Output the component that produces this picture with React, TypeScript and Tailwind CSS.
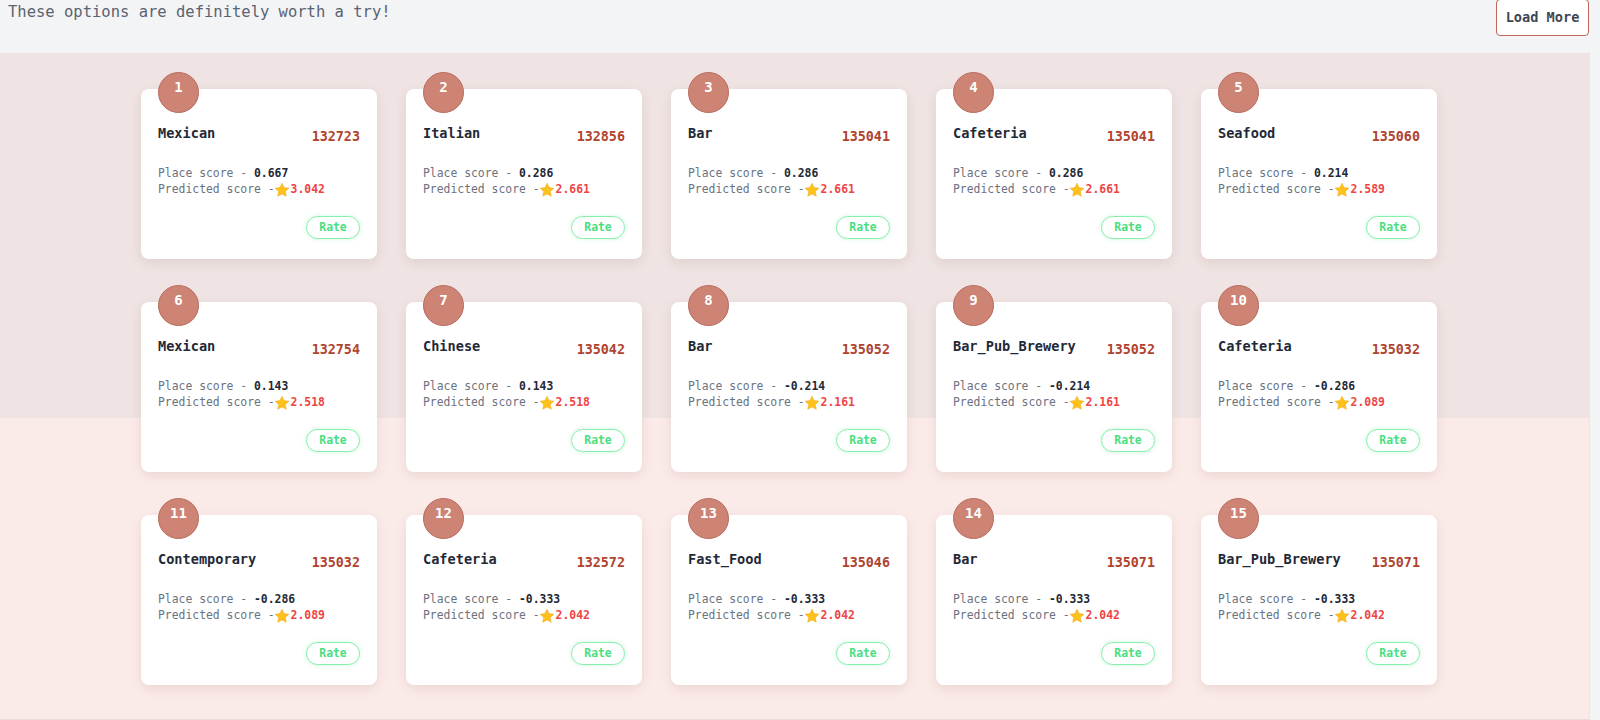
import React from "react";

const places = [
    { name: "Mexican", id: "132723", place: "0.667", predicted: "3.042" },
    { name: "Italian", id: "132856", place: "0.286", predicted: "2.661" },
    { name: "Bar", id: "135041", place: "0.286", predicted: "2.661" },
    { name: "Cafeteria", id: "135041", place: "0.286", predicted: "2.661" },
    { name: "Seafood", id: "135060", place: "0.214", predicted: "2.589" },
    { name: "Mexican", id: "132754", place: "0.143", predicted: "2.518" },
    { name: "Chinese", id: "135042", place: "0.143", predicted: "2.518" },
    { name: "Bar", id: "135052", place: "-0.214", predicted: "2.161" },
    { name: "Bar_Pub_Brewery", id: "135052", place: "-0.214", predicted: "2.161" },
    { name: "Cafeteria", id: "135032", place: "-0.286", predicted: "2.089" },
    { name: "Contemporary", id: "135032", place: "-0.286", predicted: "2.089" },
    { name: "Cafeteria", id: "132572", place: "-0.333", predicted: "2.042" },
    { name: "Fast_Food", id: "135046", place: "-0.333", predicted: "2.042" },
    { name: "Bar", id: "135071", place: "-0.333", predicted: "2.042" },
    { name: "Bar_Pub_Brewery", id: "135071", place: "-0.333", predicted: "2.042" },
];

function Star() {
    return (
        <svg viewBox="0 0 24 24" className="w-[16px] h-[16px] -ml-px shrink-0">
            <path
                d="M12 1.8l3.1 6.6 7.2.9-5.3 5 1.4 7.1L12 17.9l-6.4 3.5L7 14.3l-5.3-5 7.2-.9z"
                fill="#fcc21b"
                stroke="#f4a81c"
                strokeWidth="0.8"
                strokeLinejoin="round"
            />
        </svg>
    );
}

function PlaceCard(props: any) {
    const p = props.data;
    return (
        <div className="relative w-[236px] h-[170px] bg-white rounded-lg shadow-[0_4px_12px_rgba(90,40,30,0.10)] px-[17px] pt-[34px]">
            <div className="absolute left-[17px] -top-[17px] w-[41px] h-[41px] rounded-full bg-[#cd8474] border border-[#b86b5d] flex justify-center pt-[4px]">
                <span className="text-white font-bold text-[14px] leading-5">
                    {props.index}
                </span>
            </div>
            <div className="flex justify-between items-start">
                <span className="text-[#1f2937] font-bold text-[13.6px] leading-5">
                    {p.name}
                </span>
                <span className="mt-1 text-[#b0442f] font-bold text-[13.4px] leading-5">
                    {p.id}
                </span>
            </div>
            <div className="mt-[18px] flex flex-col text-[11.4px] leading-[16.4px] text-[#6b7280]">
                <span>
                    Place score - <span className="font-bold text-[#1f2937]">{p.place}</span>
                </span>
                <span className="flex items-center">
                    Predicted score -<Star />
                    <span className="ml-px text-[#ef4444] font-bold">{p.predicted}</span>
                </span>
            </div>
            <div className="mt-[18px] flex justify-end">
                <button className="w-[54px] h-[23px] rounded-full border border-[#86efac] bg-white text-[#4ade80] font-bold text-[11.4px] leading-4 shadow-[0_0_4px_rgba(74,222,128,0.25)]">
                    Rate
                </button>
            </div>
        </div>
    );
}

export default function App() {
    return (
        <div className="min-h-screen bg-[#f3f4f6] font-['DejaVu_Sans_Mono',monospace] overflow-hidden">
            <div className="flex justify-between items-start pl-2 pr-[11px]">
                <span className="text-[15.5px] leading-6 text-[#5b6270]">
                    These options are definitely worth a try!
                </span>
                <button className="-mt-px h-[37px] w-[93px] rounded border-[1.5px] border-[#c0665a] bg-white text-[#3f4653] font-bold text-[13.6px]">
                    Load More
                </button>
            </div>
            <div className="mt-4 mr-[10px] border-t border-[#f8f4f4] border-r border-b border-r-[#ece3e3] border-b-[#e6dcdc] bg-[linear-gradient(to_bottom,#efe4e3_365px,#fbebe8_365px)] pl-[141px] pt-[36px] pb-[34px]">
                <div className="grid grid-cols-[repeat(5,236px)] gap-x-[29px] gap-y-[43px]">
                    {places.map((e, i) => (
                        <PlaceCard key={i} data={e} index={i + 1} />
                    ))}
                </div>
            </div>
        </div>
    );
}
